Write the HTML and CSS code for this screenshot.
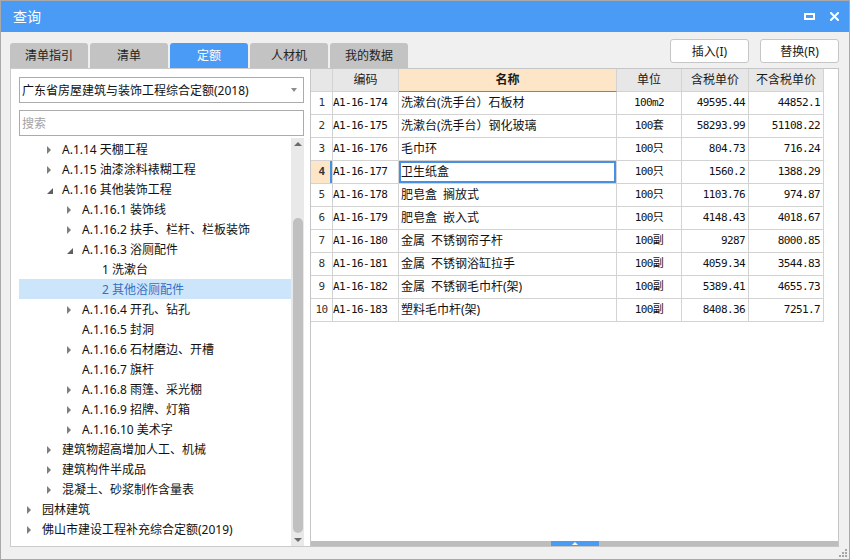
FILE: index.html
```html
<!DOCTYPE html>
<html lang="zh-CN">
<head>
<meta charset="utf-8">
<title>查询</title>
<link rel="stylesheet" href="styles.css">
</head>
<body>
<div class="window">
  <div class="titlebar">
    <span class="title">查询</span>
    <div class="winctl">
      <svg width="11" height="7" viewBox="0 0 11 7"><path d="M0 0H11V7H0Z M2 2V5H9V2Z" fill="#fff" fill-rule="evenodd"/></svg>
      <svg width="9" height="9" viewBox="0 0 9 9"><path d="M1 1L8 8M8 1L1 8" stroke="#fff" stroke-width="2" stroke-linecap="square"/></svg>
    </div>
  </div>
  <div class="topbar">
    <div class="tabs">
      <div class="tab">清单指引</div>
      <div class="tab">清单</div>
      <div class="tab active">定额</div>
      <div class="tab">人材机</div>
      <div class="tab">我的数据</div>
    </div>
    <div class="actions">
      <button class="btn">插入(I)</button>
      <button class="btn">替换(R)</button>
    </div>
  </div>
  <div class="content">
    <div class="left">
      <div class="select"><span>广东省房屋建筑与装饰工程综合定额(2018)</span><span class="caret"></span></div>
      <input class="search" placeholder="搜索">
      <div class="treewrap">
        <ul class="tree">
          <li class="node l2"><span class="tw"><i class="tri c"></i></span>A.1.14 天棚工程</li>
          <li class="node l2"><span class="tw"><i class="tri c"></i></span>A.1.15 油漆涂料裱糊工程</li>
          <li class="node l2"><span class="tw"><i class="tri e"></i></span>A.1.16 其他装饰工程</li>
          <li class="node l3"><span class="tw"><i class="tri c"></i></span>A.1.16.1 装饰线</li>
          <li class="node l3"><span class="tw"><i class="tri c"></i></span>A.1.16.2 扶手、栏杆、栏板装饰</li>
          <li class="node l3"><span class="tw"><i class="tri e"></i></span>A.1.16.3 浴厕配件</li>
          <li class="node l4"><span class="tw"></span>1 洗漱台</li>
          <li class="node l4 sel"><span class="tw"></span>2 其他浴厕配件</li>
          <li class="node l3"><span class="tw"><i class="tri c"></i></span>A.1.16.4 开孔、钻孔</li>
          <li class="node l3"><span class="tw"></span>A.1.16.5 封洞</li>
          <li class="node l3"><span class="tw"><i class="tri c"></i></span>A.1.16.6 石材磨边、开槽</li>
          <li class="node l3"><span class="tw"></span>A.1.16.7 旗杆</li>
          <li class="node l3"><span class="tw"><i class="tri c"></i></span>A.1.16.8 雨篷、采光棚</li>
          <li class="node l3"><span class="tw"><i class="tri c"></i></span>A.1.16.9 招牌、灯箱</li>
          <li class="node l3"><span class="tw"><i class="tri c"></i></span>A.1.16.10 美术字</li>
          <li class="node l2"><span class="tw"><i class="tri c"></i></span>建筑物超高增加人工、机械</li>
          <li class="node l2"><span class="tw"><i class="tri c"></i></span>建筑构件半成品</li>
          <li class="node l2"><span class="tw"><i class="tri c"></i></span>混凝土、砂浆制作含量表</li>
          <li class="node l1"><span class="tw"><i class="tri c"></i></span>园林建筑</li>
          <li class="node l1"><span class="tw"><i class="tri c"></i></span>佛山市建设工程补充综合定额(2019)</li>
        </ul>
        <div class="vscroll">
          <i class="sb-up"></i>
          <div class="thumb"></div>
          <div class="sb-fill"></div>
          <i class="sb-down"></i>
        </div>
      </div>
    </div>
    <div class="right">
      <div class="gridwrap">
        <table class="grid">
          <colgroup>
            <col class="w-num"><col class="w-code"><col class="w-name"><col class="w-unit"><col class="w-p1"><col class="w-p2">
          </colgroup>
          <thead>
            <tr><th></th><th>编码</th><th class="hl">名称</th><th>单位</th><th>含税单价</th><th>不含税单价</th></tr>
          </thead>
          <tbody>
            <tr><td class="num mono">1</td><td class="code mono">A1-16-174</td><td class="name">洗漱台(洗手台）石板材</td><td class="unit mono">100m2</td><td class="price mono">49595.44</td><td class="price mono">44852.1</td></tr>
            <tr><td class="num mono">2</td><td class="code mono">A1-16-175</td><td class="name">洗漱台(洗手台）钢化玻璃</td><td class="unit mono">100套</td><td class="price mono">58293.99</td><td class="price mono">51108.22</td></tr>
            <tr><td class="num mono">3</td><td class="code mono">A1-16-176</td><td class="name">毛巾环</td><td class="unit mono">100只</td><td class="price mono">804.73</td><td class="price mono">716.24</td></tr>
            <tr><td class="num mono cur">4</td><td class="code mono">A1-16-177</td><td class="name focus">卫生纸盒</td><td class="unit mono">100只</td><td class="price mono">1560.2</td><td class="price mono">1388.29</td></tr>
            <tr><td class="num mono">5</td><td class="code mono">A1-16-178</td><td class="name">肥皂盒&ensp;搁放式</td><td class="unit mono">100只</td><td class="price mono">1103.76</td><td class="price mono">974.87</td></tr>
            <tr><td class="num mono">6</td><td class="code mono">A1-16-179</td><td class="name">肥皂盒&ensp;嵌入式</td><td class="unit mono">100只</td><td class="price mono">4148.43</td><td class="price mono">4018.67</td></tr>
            <tr><td class="num mono">7</td><td class="code mono">A1-16-180</td><td class="name">金属&ensp;不锈钢帘子杆</td><td class="unit mono">100副</td><td class="price mono">9287</td><td class="price mono">8000.85</td></tr>
            <tr><td class="num mono">8</td><td class="code mono">A1-16-181</td><td class="name">金属&ensp;不锈钢浴缸拉手</td><td class="unit mono">100副</td><td class="price mono">4059.34</td><td class="price mono">3544.83</td></tr>
            <tr><td class="num mono">9</td><td class="code mono">A1-16-182</td><td class="name">金属&ensp;不锈钢毛巾杆(架)</td><td class="unit mono">100副</td><td class="price mono">5389.41</td><td class="price mono">4655.73</td></tr>
            <tr><td class="num mono">10</td><td class="code mono">A1-16-183</td><td class="name">塑料毛巾杆(架)</td><td class="unit mono">100副</td><td class="price mono">8408.36</td><td class="price mono">7251.7</td></tr>
          </tbody>
        </table>
      </div>
      <div class="hbar"><div class="handle"><i></i></div></div>
    </div>
  </div>
  <svg class="grip" width="10" height="10" viewBox="0 0 10 10">
    <rect x="7" y="1" width="2" height="2" fill="#a6a6a6"/>
    <rect x="4" y="4" width="2" height="2" fill="#a6a6a6"/>
    <rect x="7" y="4" width="2" height="2" fill="#a6a6a6"/>
    <rect x="1" y="7" width="2" height="2" fill="#a6a6a6"/>
    <rect x="4" y="7" width="2" height="2" fill="#a6a6a6"/>
    <rect x="7" y="7" width="2" height="2" fill="#a6a6a6"/>
  </svg>
</div>
</body>
</html>
```

FILE: styles.css
```css
* { box-sizing: border-box; }
body {
  margin: 0;
  font-family: "Noto Sans", "Noto Sans CJK SC", sans-serif;
  font-size: 12px;
  color: #111;
}
.window {
  width: 850px;
  height: 560px;
  border: 1px solid #a9a9a9;
  background: #f0f0f0;
  position: relative;
  display: flex;
  flex-direction: column;
  overflow: hidden;
}
.titlebar {
  height: 31px;
  flex: none;
  background: #4a9bf6;
  display: flex;
  align-items: center;
  justify-content: space-between;
  padding: 0 10px 0 12px;
}
.title { color: #fff; font-size: 14px; line-height: 16px; }
.winctl { display: flex; align-items: center; gap: 15px; }
.winctl svg { display: block; }

.topbar {
  height: 36px;
  flex: none;
  display: flex;
  justify-content: space-between;
  padding: 0 10px 0 9px;
}
.tabs { display: flex; gap: 2px; align-self: flex-end; }
.tab {
  width: 78px;
  height: 25px;
  background: #c3c3c3;
  border-radius: 3px 3px 0 0;
  text-align: center;
  line-height: 26px;
  color: #222;
}
.tab.active { background: #4a9bf6; color: #fff; }
.actions { display: flex; gap: 11px; margin-top: 7px; }
.btn {
  width: 79px;
  height: 24px;
  padding: 0;
  background: #fff;
  border: 1px solid #c6c6c6;
  border-radius: 3px;
  font-family: inherit;
  font-size: 12px;
  color: #1a1a1a;
}

.content {
  flex: 1;
  min-height: 0;
  display: flex;
  padding: 0 10px 12px 9px;
}
.left {
  width: 300px;
  flex: none;
  background: #fff;
  border: 1px solid #cbcbcb;
  border-right: none;
  padding: 8px 6px 0 8px;
  display: flex;
  flex-direction: column;
}
.select {
  height: 26px;
  flex: none;
  border: 1px solid #ababab;
  display: flex;
  align-items: center;
  justify-content: space-between;
  padding: 0 6px 0 2px;
  line-height: 25px;
  white-space: nowrap;
}
.caret {
  width: 0;
  height: 0;
  border-top: 4px solid #8c8c8c;
  border-left: 3.5px solid transparent;
  border-right: 3.5px solid transparent;
}
.search {
  margin: 7px 0 0;
  height: 26px;
  flex: none;
  width: 100%;
  border: 1px solid #ababab;
  padding: 0 2px;
  font-family: inherit;
  font-size: 12px;
  outline: none;
}
.search::placeholder { color: #a3a3a3; }

.treewrap { flex: 1; min-height: 0; display: flex; margin-top: 2px; }
.tree { flex: 1; list-style: none; margin: 0; padding: 1px 0 0; }
.node {
  height: 20px;
  line-height: 21px;
  display: flex;
  align-items: center;
  white-space: nowrap;
  color: #111;
}
.l1 { padding-left: 8px; }
.l2 { padding-left: 28px; }
.l3 { padding-left: 48px; }
.l4 { padding-left: 68px; }
.node.sel { background: #cde5fa; color: #3270c6; }
.tw { width: 15px; height: 20px; flex: none; display: flex; align-items: center; }
.tri { display: block; width: 0; height: 0; }
.tri.c {
  border-left: 4px solid #7e7e7e;
  border-top: 4px solid transparent;
  border-bottom: 4px solid transparent;
  margin-top: 1px;
}
.tri.e {
  border-bottom: 6px solid #5f5f5f;
  border-left: 6px solid transparent;
  margin-top: 3px;
}

.vscroll {
  width: 13px;
  flex: none;
  background: #e9e9e9;
  display: flex;
  flex-direction: column;
  align-items: center;
}
.sb-up {
  display: block;
  width: 0; height: 0;
  border-bottom: 4px solid #6b6b6b;
  border-left: 4.5px solid transparent;
  border-right: 4.5px solid transparent;
  margin-top: 4px;
}
.thumb {
  width: 10px;
  height: 315px;
  margin-top: 72px;
  background: #c0c0c0;
  border-radius: 5px;
}
.sb-fill { flex: 1; }
.sb-down {
  display: block;
  width: 0; height: 0;
  border-top: 4px solid #6b6b6b;
  border-left: 4.5px solid transparent;
  border-right: 4.5px solid transparent;
  margin-bottom: 4px;
}

.right {
  flex: 1;
  min-width: 0;
  background: #fff;
  border: 1px solid #c6c6c6;
  display: flex;
  flex-direction: column;
}
.gridwrap { flex: 1; min-height: 0; }
.grid {
  border-collapse: separate;
  border-spacing: 0;
  table-layout: fixed;
  width: 513px;
}
.w-num { width: 22px; }
.w-code { width: 66px; }
.w-name { width: 218px; }
.w-unit { width: 65px; }
.w-p1 { width: 67px; }
.w-p2 { width: 75px; }
.grid tr { height: 23px; }
.grid th, .grid td {
  padding: 0;
  border-right: 1px solid #d3d3d3;
  border-bottom: 1px solid #d3d3d3;
  line-height: 22px;
  white-space: nowrap;
  overflow: hidden;
  font-size: 12px;
}
.grid th {
  background: #e7e7e7;
  font-weight: normal;
  text-align: center;
  color: #1a1a1a;
}
.grid th.hl {
  background: #fde6c8;
  font-weight: bold;
  border-bottom-color: #4a90e2;
}
.mono {
  font-family: "DejaVu Sans Mono", "Noto Sans CJK SC", monospace;
  font-size: 11px;
  letter-spacing: -0.6px;
}
.grid td.mono { font-size: 11px; }
.num { text-align: center; color: #333; }
.num.cur {
  background: #fde6c8;
  font-weight: bold;
  box-shadow: inset -2px 0 0 #4a90e2;
}
.code { padding-left: 2px; }
.grid td.name { padding-left: 2px; }
.grid td.name.focus { box-shadow: inset 0 0 0 2px #4a90e2; }
.unit { text-align: center; }
.grid td.price { text-align: right; padding-right: 3px; }

.hbar {
  height: 5px;
  flex: none;
  background: #bdbdbd;
  display: flex;
  justify-content: center;
}
.handle {
  width: 48px;
  height: 5px;
  background: #4a9bf6;
  display: flex;
  justify-content: center;
  align-items: flex-end;
}
.handle i {
  display: block;
  width: 0; height: 0;
  border-bottom: 3px solid #fff;
  border-left: 3px solid transparent;
  border-right: 3px solid transparent;
  margin-bottom: 1px;
}
.grip { position: absolute; right: 1px; bottom: 1px; display: block; }
```
